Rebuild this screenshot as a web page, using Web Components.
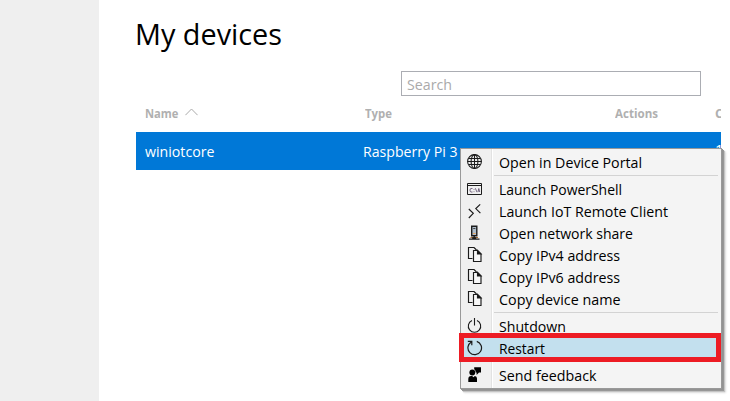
<!DOCTYPE html>
<html lang="en">
<head>
<meta charset="utf-8">
<title>My devices</title>
<style>
html,body{margin:0;height:100%;overflow:hidden;background:#fff;font-family:"Open Sans","Noto Sans",sans-serif}
</style>
</head>
<body>
<device-app></device-app>
<script>
// A single line of text scaled horizontally to a given width.
class FitText extends HTMLElement {
  connectedCallback() {
    const root = this.attachShadow({mode: 'open'});
    root.innerHTML = `<style>:host{display:block;white-space:nowrap}
      span{display:inline-block;transform-origin:0 50%}</style><span><slot></slot></span>`;
    const span = root.querySelector('span');
    const w = parseFloat(this.getAttribute('w'));
    this.style.width = w + 'px';
    const real = span.getBoundingClientRect().width;
    if (real) span.style.transform = `scaleX(${w / real})`;
  }
}

const ICONS = {
  globe: '<g stroke-width="1.05"><circle cx="7.5" cy="7.5" r="6.9"/><ellipse cx="7.5" cy="7.5" rx="3.4" ry="6.9"/><path d="M7.5.5v14M.5 7.5h14M1.8 4.5h11.4M1.8 10.5h11.4"/></g>',
  shell: '<path d="M.5 2.5h14v11H.5zM.5 4.5h14"/><path stroke-width=".8" stroke="#546" d="M5.5 7.5H4Q3 7.5 3 9.2T4 11h1.5M7 8v.8M7 10.3v.8M8.3 7.2l1.7 4M11 11l.8-3.5.9 3.5"/>',
  remote: '<path stroke-width="1.15" d="M1.8 6l4.5 4.3L1.8 15M13.2 1.3L8.8 5.6l4.6 4.6"/>',
  share: '<path stroke-width="1.4" fill="#aebdcb" d="M4.7 1.2h5.1v9.6H4.7z"/><path stroke="#444" d="M6.2 3.5h2.2"/><path stroke="#e8a45c" d="M6 8.5h2.6"/><path stroke="#a9682c" d="M3.5 12.5h7.5"/><path stroke-width="1.3" d="M7.2 11v2.5M2 14.2h10.5M5.2 13h4"/>',
  copy: '<g stroke-width="1.15"><path d="M5.5 11.5H1.5v-11H7L9.5 3"/><path fill="#f7f7f7" d="M6.5 3.5h4L14 7v7.5H6.5z"/><path fill="#111" d="M10.5 3.5L14 7h-3.5z"/></g>',
  power: '<path stroke-width="1.1" d="M5 2.4a6.2 6.2 0 1 0 5 0M7.5 0V7.5"/>',
  restart: '<path stroke-width="1.2" d="M9.8 1.4A6.8 6.8 0 1 1 4.3 2M.8 1.3h4v4"/>',
  feedback: '<g fill="#000" stroke="none"><circle cx="5.3" cy="5.5" r="2.9"/><path d="M1.3 15v-2.7Q1.3 9 4.2 9h1l1.3 1.2L7.8 9Q10 9.3 10 11.5V15zM7.2.3h6.8v5.3H12L9.6 7.9V5.6H8.7Q8.8 3.3 7.2 2.3z"/></g>'
};
class MenuIcon extends HTMLElement {
  connectedCallback() {
    this.attachShadow({mode: 'open'}).innerHTML = `<style>:host{display:block;width:16px;height:16px}svg{display:block}</style>
      <svg width="16" height="16" viewBox="0 0 16 16" fill="none" stroke="#1b1b1b">${ICONS[this.getAttribute('name')]}</svg>`;
  }
}

class MenuItem extends HTMLElement {
  connectedCallback() {
    const active = this.hasAttribute('active');
    this.attachShadow({mode: 'open'}).innerHTML = `<style>
      :host{display:block;height:22px;position:relative}
      :host([active]){z-index:1}
      .row{display:flex;align-items:center;height:22px;padding-left:6px;gap:16px;position:relative}
      menu-icon{margin-bottom:2px}
      fit-text{font-size:14.4px;line-height:22px;color:#000}
      .mark{position:absolute;left:-2px;top:-5px;width:252px;height:19px;border:5px solid #ed1c24;background:#c3e0ee}
      </style>${active ? '<div class="mark"></div>' : ''}
      <div class="row"><menu-icon name="${this.getAttribute('icon')}"></menu-icon>
      <fit-text w="${this.getAttribute('w')}">${this.getAttribute('label')}</fit-text></div>`;
  }
}
class MenuRule extends HTMLElement {
  connectedCallback() {
    this.attachShadow({mode: 'open'}).innerHTML = `<style>:host{display:block;height:5px;padding-left:33px}
      div{height:1px;margin-right:3px;background:#d3d3d3;position:relative;top:1px}</style><div></div>`;
  }
}

class ContextMenu extends HTMLElement {
  connectedCallback() {
    this.attachShadow({mode: 'open'}).innerHTML = `<style>
      :host{display:block;box-sizing:border-box;width:262px;height:241px;padding-top:3px;border:1px solid #999;
        background:linear-gradient(90deg,#f0f0f0 30px,#e2e2e2 30px,#e2e2e2 31px,#fff 31px,#fff 32px,#f4f4f4 32px);
        box-shadow:1px 1px 0 #929292,2px 2px 0 #979797,3px 3px 1px #c4c4c4,4px 4px 2px #e2e2e2}
      </style><slot></slot>`;
  }
}

class DeviceTable extends HTMLElement {
  connectedCallback() {
    this.attachShadow({mode: 'open'}).innerHTML = `<style>
      :host{display:block;width:585px;overflow:hidden}
      .r{display:grid;box-sizing:border-box;padding-left:9px}
      .h{height:36px;font-size:11.7px;font-weight:700;color:#b0b0b0;line-height:16px;padding-top:9px;grid-template-columns:218px 252px 98px 60px}
      .h>:nth-child(2),.h>:nth-child(4){padding-left:2px}
      .n{display:flex;gap:6px}
      .h .n svg{margin-top:3px}
      .d{height:38px;background:#0078d7;color:#fff;font-size:14.5px;line-height:39px;grid-template-columns:218px 352px 14px}
      .d>span{line-height:36px}
      </style>
      <div class="r h"><div class="n"><fit-text w="33.5">Name</fit-text><svg width="13" height="8" viewBox="0 0 13 8" fill="none" stroke="#aaa"><path d="M.4 7.2L6.5 1l6.1 6.2"/></svg></div>
      <fit-text w="27">Type</fit-text><fit-text w="43">Actions</fit-text><fit-text w="8">C</fit-text></div>
      <div class="r d"><fit-text w="69.5">winiotcore</fit-text><fit-text w="94.5">Raspberry Pi 3</fit-text><span>1</span></div>`;
  }
}

class SearchBox extends HTMLElement {
  connectedCallback() {
    this.attachShadow({mode: 'open'}).innerHTML = `<style>
      :host{display:block;box-sizing:border-box;width:300px;height:25px;border:1px solid #abadb3;padding-left:5px;
      font-size:14.5px;line-height:25px;color:#aaa;background:#fff}fit-text{height:23px}</style><fit-text w="45">Search</fit-text>`;
  }
}

class DeviceApp extends HTMLElement {
  connectedCallback() {
    this.attachShadow({mode: 'open'}).innerHTML = `<style>
      :host{display:flex;width:730px;height:401px;position:relative;overflow:hidden}
      aside{width:99px;background:#efefef;flex:none}
      main{flex:1;padding-left:37px;display:flex;flex-direction:column}
      h1{margin:0;font-size:29.5px;font-weight:400;line-height:40px;height:57px;padding-top:14px;color:#000}
      h1 fit-text{margin-left:-1px}
      search-box{margin-left:265px}
      context-menu{position:absolute;left:460px;top:148px}
      </style>
      <aside></aside>
      <main><h1><fit-text w="147">My devices</fit-text></h1><search-box></search-box><device-table></device-table></main>
      <context-menu>
        <menu-item icon="globe" label="Open in Device Portal" w="143"></menu-item><menu-rule></menu-rule>
        <menu-item icon="shell" label="Launch PowerShell" w="123"></menu-item>
        <menu-item icon="remote" label="Launch IoT Remote Client" w="169"></menu-item>
        <menu-item icon="share" label="Open network share" w="134"></menu-item>
        <menu-item icon="copy" label="Copy IPv4 address" w="121"></menu-item>
        <menu-item icon="copy" label="Copy IPv6 address" w="121"></menu-item>
        <menu-item icon="copy" label="Copy device name" w="121.5"></menu-item><menu-rule></menu-rule>
        <menu-item icon="power" label="Shutdown" w="67"></menu-item>
        <menu-item icon="restart" label="Restart" w="46" active></menu-item><menu-rule></menu-rule>
        <menu-item icon="feedback" label="Send feedback" w="97.5"></menu-item>
      </context-menu>`;
  }
}
customElements.define('fit-text', FitText);
customElements.define('menu-icon', MenuIcon);
customElements.define('menu-item', MenuItem);
customElements.define('menu-rule', MenuRule);
customElements.define('context-menu', ContextMenu);
customElements.define('device-table', DeviceTable);
customElements.define('search-box', SearchBox);
customElements.define('device-app', DeviceApp);
</script>
</body>
</html>
